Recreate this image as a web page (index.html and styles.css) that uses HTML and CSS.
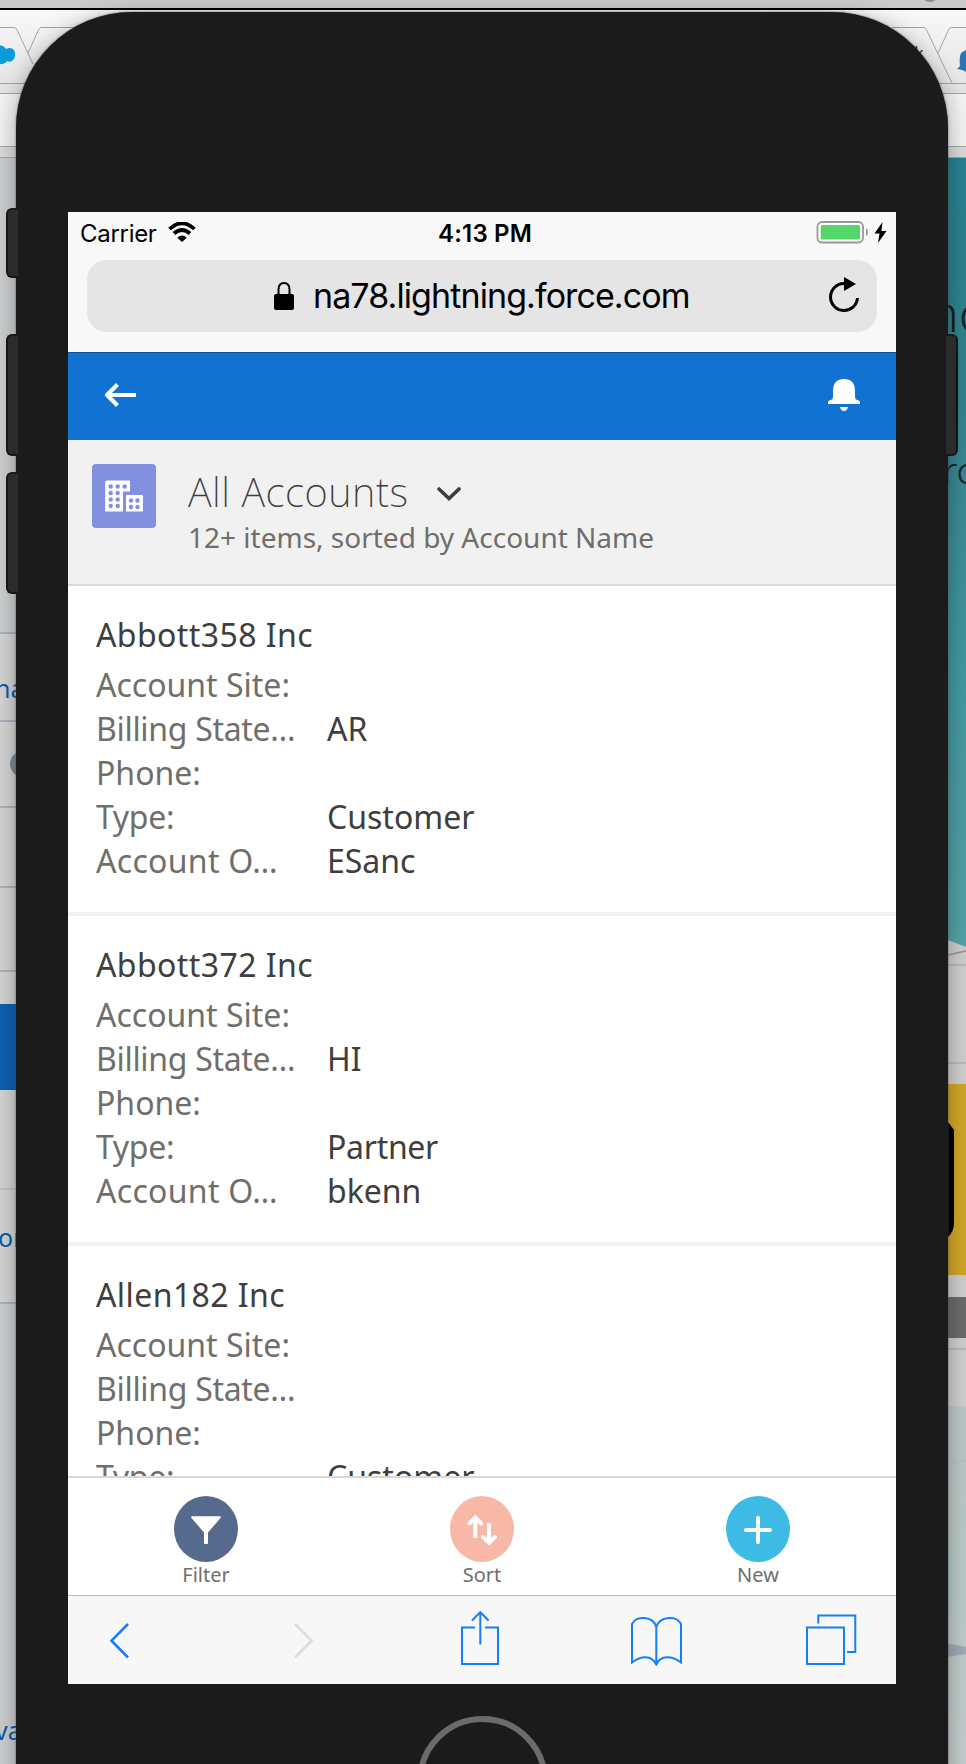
FILE: index.html
```html
<!DOCTYPE html>
<html lang="en">
<head>
<meta charset="utf-8">
<title>All Accounts</title>
<link rel="stylesheet" href="styles.css">
</head>
<body>
<div class="desktop">
  <svg class="backdrop" viewBox="0 0 966 1764" width="966" height="1764" aria-hidden="true">
    <defs>
      <linearGradient id="teal" x1="0" y1="0" x2="0" y2="1"><stop offset="0" stop-color="#278091"/><stop offset=".3" stop-color="#33838c"/><stop offset=".65" stop-color="#44979f"/><stop offset="1" stop-color="#52a3a6"/></linearGradient>
      <linearGradient id="mint" x1="0" y1="0" x2="0" y2="1"><stop offset="0" stop-color="#bcc6c6"/><stop offset=".5" stop-color="#b8cac7"/><stop offset="1" stop-color="#c6cccd"/></linearGradient>
      <linearGradient id="tab" x1="0" y1="0" x2="0" y2="1"><stop offset="0" stop-color="#f8f8f8"/><stop offset="1" stop-color="#e2e2e2"/></linearGradient>
    </defs>
    <rect width="966" height="1764" fill="#cbcdcf"/>
    <rect width="966" height="8" fill="#cacbcd"/>
    <circle cx="930" cy="-7" r="9" fill="#8d8d91"/>
    <rect y="8" width="966" height="2" fill="#000"/>
    <rect y="10" width="966" height="84" fill="url(#tab)"/>
    <rect y="94" width="966" height="52" fill="#f2f2f2"/>
    <rect y="146" width="966" height="12" fill="#dadada"/>
    <g fill="none" stroke="#a4a4a4"><path d="M0 27.5H14Q16 27.500 17 30L33 64M74 27.500H41Q39 28 38 31L28 53M0 83.500H28M0 93.500H26M0 146.500H18M0 157.500H18"/><path d="M892 27.500H924Q926 28 927 31L952 83M966 27.500H951Q949 28 948 31L938 53M930 83.500H966M940 93.500H966M944 146.500H966M944 157.500H966"/></g>
    <path d="M-8 46C-4 44 4 45 6 49C12 46 16 51 15 56C14 61 10 63 7 61C4 65 0 65 -8 62Z" fill="#0a9bdc"/>
    <text x="914" y="60" font-size="18" fill="#333">k</text>
    <path d="M966 50L961 53Q959 58 960 66L957 69Q964 70 966 72Z" fill="#2c74b3"/>
    <rect y="633" width="30" height="670" fill="#d3d3d3"/>
    <g stroke="#a9b0bb" stroke-width="2"><path d="M0 633H30M0 721H30M0 807H30M0 887H30M0 971H30M0 1303H30"/></g>
    <path d="M0 1189H30" stroke="#c3c3c3" stroke-width="2"/>
    <rect y="1004" width="30" height="86" fill="#0e60b3"/>
    <circle cx="23" cy="764" r="13" fill="#7e8992"/>
    <g fill="#0b5cab" font-size="25"><text x="-5" y="698">na</text><text x="-2" y="1247">or</text><text x="-5" y="1740">va</text></g>
    <rect x="940" y="158" width="26" height="790" fill="url(#teal)"/>
    <g fill="#1b2023" class="hero-text"><text x="929" y="332" font-size="50">nc</text><text x="943" y="484" font-size="36">rc</text></g>
    <path d="M940 937L966 947V1406H940Z" fill="#cecece"/>
    <path d="M948 955L966 951" stroke="#929292" stroke-width="1.500"/>
    <path d="M940 965H966M940 1063H966M940 1349H966" stroke="#bababa" stroke-width="2"/>
    <rect x="940" y="1084" width="26" height="191" fill="#d0a528"/>
    <path d="M940 1120L949 1123L954 1130V1222Q954 1232 948 1237H940Z" fill="#000"/>
    <rect x="940" y="1297" width="26" height="41" fill="#6b6b6b"/>
    <path d="M940 1404L966 1407V1764H940Z" fill="url(#mint)"/>
    <path d="M940 1466L966 1460" stroke="#aebcba"/>
    <path d="M940 1642L966 1647V1654L940 1658Z" fill="#a0a9b5"/>
  </svg>

  <i class="side-button silent"></i><i class="side-button vol-up"></i><i class="side-button vol-down"></i><i class="side-button power"></i>

  <div class="phone">
    <main class="screen">
      <header class="safari">
        <div class="status">
          <span class="carrier">Carrier</span>
          <svg class="wifi" viewBox="0 0 28 20" width="28" height="20"><path d="M1.500 7Q14-4.500 26.500 7" fill="none" stroke="#000" stroke-width="3.700"/><path d="M6 11.500Q14 4.500 22 11.500" fill="none" stroke="#000" stroke-width="3.700"/><path d="M14 20L9.300 15.700Q14 11.500 18.700 15.700Z"/></svg>
          <span class="clock">4:13 PM</span>
          <svg class="battery" viewBox="0 0 72 24" width="72" height="24"><rect x="1.500" y="2" width="45.500" height="20.500" rx="4.500" fill="#fff" stroke="#999" stroke-width="1.800"/><rect x="4.700" y="5" width="39.300" height="14.500" rx="1.500" fill="#53d769"/><path d="M50 8Q52 9 52 12T50 16Z" fill="#999"/><path d="M66.500 2L58.500 13.500H63.500L62 23L70.500 11H65.500Z"/></svg>
        </div>
        <div class="address">
          <svg class="lock" viewBox="0 0 20 28" width="20" height="28"><path d="M4.500 13V7.500Q4.500 1 10 1T15.500 7.500V13" fill="none" stroke="#000" stroke-width="2"/><rect y="12" width="20" height="16" rx="2"/></svg>
          <span class="url">na78.lightning.force.com</span>
          <svg class="reload" viewBox="0 0 32 36" width="32" height="36"><path d="M16 6.500A13.500 13.500 0 1 0 29.500 21" fill="none" stroke="#000" stroke-width="3"/><path d="M16 0L28 7L16 14Z"/></svg>
        </div>
      </header>

      <nav class="appbar">
        <svg viewBox="0 0 32 26" width="32" height="26"><path d="M13.500 2.500L3 13L13.500 23.500M3 13H32" fill="none" stroke="#fff" stroke-width="4.200" stroke-linejoin="round"/></svg>
        <svg viewBox="0 0 32 32" width="32" height="32" fill="#fff"><path d="M5 18V12Q5 0 16 0T27 12V18Q27 20.500 29 21Q32 21.500 32 23V25H0V23Q0 21.500 3 21Q5 20.500 5 18ZM12 28H20Q19 32 16 32T12 28Z"/></svg>
      </nav>

      <section class="list-head">
        <svg class="account-icon" viewBox="0 0 64 64" width="64" height="64"><rect width="64" height="64" rx="4" fill="#8290df"/><path d="M14 17.500Q14 16.500 15 16.500H37Q38 16.500 38 17.500V27.500H31V47.500H13.200V17.500ZM35 31H50Q51 31 51 32V47.500H34V32Q34 31 35 31Z" fill="#fff"/><g fill="#8290df"><circle cx="18.700" cy="22.500" r="2.200"/><circle cx="25.700" cy="22.500" r="2.200"/><circle cx="32.700" cy="22.500" r="2.200"/><circle cx="18.700" cy="29" r="2.200"/><circle cx="25.700" cy="29" r="2.200"/><circle cx="18.700" cy="35.500" r="2.200"/><circle cx="25.700" cy="35.500" r="2.200"/><circle cx="18.700" cy="42" r="2.200"/><circle cx="25.700" cy="42" r="2.200"/><circle cx="39" cy="36.500" r="2.200"/><circle cx="45.500" cy="36.500" r="2.200"/><circle cx="39" cy="43" r="2.200"/><circle cx="45.500" cy="43" r="2.200"/></g></svg>
        <div class="heading">
          <h1><span>All Accounts</span><svg viewBox="0 0 24 14" width="24" height="14"><path d="M2 2L12 11.500L22 2" fill="none" stroke="#3e3e3c" stroke-width="3.600" stroke-linecap="round"/></svg></h1>
          <p>12+ items, sorted by Account Name</p>
        </div>
      </section>

      <div class="records">
        <article class="record">
          <h2>Abbott358 Inc</h2>
          <dl><dt>Account Site:</dt><dd></dd><dt class="snug">Billing State…</dt><dd>AR</dd><dt>Phone:</dt><dd></dd><dt class="snug">Type:</dt><dd>Customer</dd><dt class="loose">Account O…</dt><dd>ESanc</dd></dl>
        </article>
        <article class="record">
          <h2>Abbott372 Inc</h2>
          <dl><dt>Account Site:</dt><dd></dd><dt class="snug">Billing State…</dt><dd>HI</dd><dt>Phone:</dt><dd></dd><dt class="snug">Type:</dt><dd class="snug">Partner</dd><dt class="loose">Account O…</dt><dd>bkenn</dd></dl>
        </article>
        <article class="record">
          <h2>Allen182 Inc</h2>
          <dl><dt>Account Site:</dt><dd></dd><dt class="snug">Billing State…</dt><dd></dd><dt>Phone:</dt><dd></dd><dt class="snug">Type:</dt><dd>Customer</dd></dl>
        </article>
      </div>

      <div class="actions">
        <div class="action"><svg class="filter" viewBox="0 0 64 66" width="64" height="66"><path d="M18 20.300H46Q47.500 20.500 46.500 22L34 36.500V47Q34 48 33 48H31Q30 48 30 47V36.500L17.500 22Q16.500 20.500 18 20.300Z" fill="#fff"/></svg><span>Filter</span></div>
        <div class="action"><svg class="sort" viewBox="0 0 64 66" width="64" height="66"><g fill="none" stroke="#fff" stroke-width="4"><path d="M25.300 42V23M39 27V46"/><path d="M19.500 27.500L25.300 21.700L31.100 27.500M33 41L39 46.700L45 41" stroke-linecap="round"/></g></svg><span>Sort</span></div>
        <div class="action"><svg class="new" viewBox="0 0 64 66" width="64" height="66"><path d="M32 22V46M20 34H44" stroke="#fff" stroke-width="4" stroke-linecap="round"/></svg><span>New</span></div>
      </div>

      <footer class="toolbar">
        <svg class="back" viewBox="109 1610 21 56" width="21" height="56"><path d="M128 1624L111.500 1640.700L128 1657.500" stroke-width="2.600"/></svg>
        <svg class="forward" viewBox="293 1610 21 56" width="21" height="56"><path d="M295 1624L311.500 1640.700L295 1657.500" stroke-width="2.600"/></svg>
        <svg class="share" viewBox="460 1610 40 56" width="40" height="56"><path d="M475 1627.500H462V1664H498V1627.500H485M480.300 1644.500V1613M472 1620.500L480.300 1612.200L488.600 1620.500"/></svg>
        <svg class="book" viewBox="630 1610 52 56" width="52" height="56"><path d="M656.300 1664.500V1627C653 1615.500 636 1615.500 632 1624V1662.500C641 1656 651 1654.500 656.300 1664.500C661 1654.500 672 1656 681 1662.500V1624C677 1615.500 660 1615.500 656.300 1627"/></svg>
        <svg class="tabs" viewBox="805 1610 52 56" width="52" height="56"><path d="M807 1627.500H844V1664H807ZM818.300 1623.500V1615.500H855.300V1652H847"/></svg>
      </footer>
    </main>
    <i class="home"></i>
  </div>
</div>
</body>
</html>
```
FILE: styles.css
```css
* { box-sizing: border-box; }
body { margin: 0; font-family: "Noto Sans", sans-serif; }
h1, h2, p, dl, dd { margin: 0; font-weight: 400; }
svg { display: block; flex: none; }

.desktop { position: relative; width: 966px; height: 1764px; overflow: hidden; }
.backdrop { position: absolute; inset: 0; }
.hero-text { font-weight: 300; }

.side-button { position: absolute; left: 6px; width: 12px; height: 122px; background: #2b2b2b; border: 2px solid #151717; border-right: 0; border-radius: 6px 0 0 6px; z-index: 1; }
.silent { top: 208px; height: 70px; }
.vol-up { top: 334px; }
.vol-down { top: 472px; }
.power { left: 946px; top: 334px; border-right: 2px solid #0d1414; border-left: 0; border-radius: 0 6px 6px 0; }

.phone { position: relative; width: 932px; height: 1900px; margin: 12px 0 0 16px; padding: 200px 52px 0; background: #1b1b1b; border-radius: 116px 116px 0 0; box-shadow: 0 0 2px #555, 0 4px 22px rgba(0, 0, 0, .32); display: flex; flex-direction: column; align-items: center; }
.screen { display: flex; flex-direction: column; width: 828px; height: 1472px; background: #fff; overflow: hidden; }

.safari { height: 140px; background: #f8f8f8; font-family: Inter, sans-serif; color: #000; flex: none; }
.status { display: flex; align-items: center; height: 48px; padding: 1px 8px 6px 12px; font-size: 24px; line-height: 41px; }
.wifi { margin-left: 11px; margin-top: -4px; }
.carrier { width: 77px; white-space: nowrap; letter-spacing: -.3px; }
.clock { margin-left: 242px; font-weight: 600; width: 95px; white-space: nowrap; letter-spacing: .2px; }
.battery { margin-left: auto; margin-top: -4px; }
.address { display: flex; align-items: center; width: 790px; height: 72px; margin: 0 19px; padding: 0 17px 0 187px; border-radius: 20px; background: #e5e5e5; font-size: 34px; }
.lock { margin-top: -1px; }
.url { margin-left: 19px; white-space: nowrap; letter-spacing: -.91px; margin-top: -1px; }
.reload { margin-left: auto; margin-top: -2px; }

.appbar { display: flex; align-items: center; justify-content: space-between; height: 88px; padding: 0 36px 3px; background: #1272d1; border-top: 1px solid #0b5597; flex: none; }

.list-head { display: flex; height: 146px; padding: 24px 24px 0; background: #f1f1f1; border-bottom: 2px solid #dadada; flex: none; }
.heading { margin-left: 32px; }
h1 { display: flex; align-items: center; height: 56px; font-size: 40px; line-height: 56px; font-weight: 200; letter-spacing: .52px; color: #3e3e3c; }
h1 svg { margin-left: 28px; margin-top: 3px; }
.heading p { font-size: 28px; line-height: 35px; color: #706e6b; white-space: nowrap; }

.records { height: 890px; overflow: hidden; flex: none; }
.record { height: 330px; padding: 26px 28px 0; border-bottom: 4px solid #f1f1f1; color: #3e3e3c; font-size: 32px; }
.record h2 { font-size: 32px; line-height: 46px; height: 51px; letter-spacing: .42px; }
.record dl { display: grid; grid-template-columns: 231px 1fr; grid-auto-rows: 44px; line-height: 44px; }
.record dt { color: #706e6b; white-space: nowrap; }
.snug { letter-spacing: -.3px; }
.loose { letter-spacing: .3px; }

.actions { display: grid; grid-template-columns: repeat(3, 276px); height: 119px; padding-top: 18px; border-top: 2px solid #d8d8d8; flex: none; }
.action { display: flex; flex-direction: column; align-items: center; font-size: 20px; line-height: 25px; color: #706e6b; }
.action svg { border-radius: 50%; }
.filter { background: #566a8d; }
.sort { background: #f8b8a7; }
.new { background: #3dbbe5; }

.toolbar { display: flex; height: 89px; padding: 14px 0 0 41px; background: #f7f7f7; border-top: 1px solid #bdbdbd; flex: none; }
.toolbar svg { fill: none; stroke: #147efb; stroke-width: 2; stroke-linecap: butt; }
.toolbar .forward { margin-left: 163px; stroke: #dcdcdc; }
.share { margin-left: 146px; }
.book { margin-left: 130px; }
.tabs { margin-left: 123px; }

.home { display: block; width: 131px; height: 131px; margin-top: 32px; border: 6px solid #6b6b6b; border-radius: 50%; flex: none; }
```
